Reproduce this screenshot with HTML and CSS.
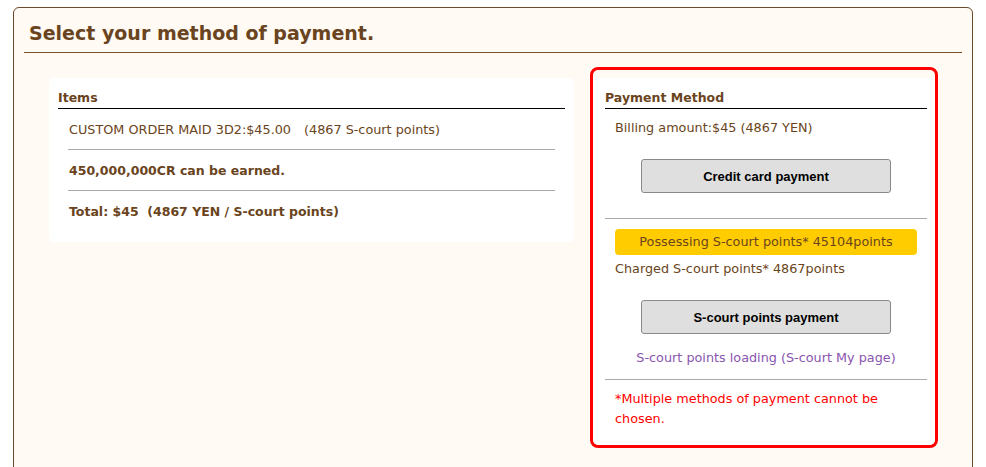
FILE: index.html
```html
<!DOCTYPE html>
<html>
<head>
<meta charset="utf-8">
<link rel="stylesheet" href="styles.css">
</head>
<body>
<div class="panel">
  <h1 class="title">Select your method of payment.</h1>
  <div class="content">
    <div class="items">
      <h2 class="box-head">Items</h2>
      <div class="row">CUSTOM ORDER MAID 3D2:$45.00　(4867 S-court points)</div>
      <div class="row bold">450,000,000CR can be earned.</div>
      <div class="row bold last">Total: $45&nbsp;&nbsp;(4867 YEN / S-court points)</div>
    </div>
    <div class="pay-outer">
      <div class="pay">
        <h2 class="box-head">Payment Method</h2>
        <div class="section card-sec">
          <p class="line billing">Billing amount:$45 (4867 YEN)</p>
          <div class="btn-wrap"><button class="btn btn-card">Credit card payment</button></div>
        </div>
        <div class="section pts-sec">
          <div class="possess">Possessing S-court points* 45104points</div>
          <p class="line charged">Charged S-court points* 4867points</p>
          <div class="btn-wrap"><button class="btn btn-pts">S-court points payment</button></div>
          <p class="link">S-court points loading (S-court My page)</p>
        </div>
        <div class="section last">
          <p class="warn">*Multiple methods of payment cannot be chosen.</p>
        </div>
      </div>
    </div>
  </div>
</div>
</body>
</html>
```
FILE: styles.css
```css
html, body {
  margin: 0;
  padding: 0;
  background: #ffffff;
}
body {
  font-family: "DejaVu Sans", Verdana, sans-serif;
  color: #6a4420;
}
.panel {
  margin: 7px 13px 0 13px;
  border: 1px solid #6b4a2a;
  border-radius: 6px;
  background: #fffaf3;
  padding: 0 10px;
  height: 480px;
}
.title {
  margin: 0;
  font-size: 19px;
  font-weight: bold;
  color: #6a4420;
  height: 45px;
  line-height: 20px;
  padding: 15px 0 0 5px;
  box-sizing: border-box;
  border-bottom: 1px solid #7a4f2a;
}
.content {
  display: flex;
  align-items: flex-start;
  padding: 14px 0 0 25px;
  gap: 16px;
}
.items {
  width: 525px;
  margin-top: 11px;
  background: #ffffff;
  border-radius: 5px;
  padding: 0 9px 10px 9px;
  box-sizing: border-box;
}
.box-head {
  margin: 0;
  font-size: 12.5px;
  font-weight: bold;
  height: 31px;
  line-height: 16px;
  padding-top: 12px;
  box-sizing: border-box;
  border-bottom: 1px solid #000;
}
.row {
  font-size: 12.8px;
  margin: 0 10px;
  height: 41px;
  line-height: 41px;
  padding-left: 1px;
  border-bottom: 1px solid #aaa;
  box-sizing: border-box;
}
.row.bold { font-weight: bold; font-size: 12.5px; }
.row.last { border-bottom: none; }
.pay-outer {
  width: 348px;
  border: 3px solid #ff0000;
  border-radius: 8px;
  padding-top: 8px;
  box-sizing: border-box;
  background: #fffaf3;
  overflow: hidden;
}
.pay {
  background: #fff;
  padding: 0 8px 0 12px;
  border-radius: 0 0 5px 5px;
}
.section {
  border-bottom: 1px solid #aaa;
  padding: 0 0 0 10px;
}
.section.last { border-bottom: none; }
.line {
  margin: 0;
  font-size: 12.8px;
  line-height: 20px;
}
.billing { padding-top: 9px; }
.charged { padding-top: 4px; }
.btn-wrap {
  display: flex;
  justify-content: center;
  padding: 0 10px 0 0;
}
.btn {
  width: 250px;
  height: 34px;
  background: #dfdfdf;
  border: 1px solid #8a8a8a;
  border-radius: 3px;
  font-family: "Liberation Sans", Arial, sans-serif;
  font-weight: bold;
  font-size: 13px;
  color: #000;
  padding: 0;
}
.btn-card { margin: 21px 0 25px; }
.btn-pts { margin: 21px 0 0; }
.possess {
  margin: 10px 10px 0 0;
  background: #ffcc00;
  border-radius: 4px;
  height: 26px;
  line-height: 26px;
  text-align: center;
  font-size: 12.8px;
}
.link {
  margin: 0;
  text-align: center;
  color: #8a55b0;
  font-size: 12.8px;
  line-height: 20px;
  padding: 14px 10px 11px 0;
}
.warn {
  margin: 0;
  color: #ff0000;
  font-size: 12.8px;
  line-height: 20px;
  padding: 9px 20px 16px 0;
}
```
